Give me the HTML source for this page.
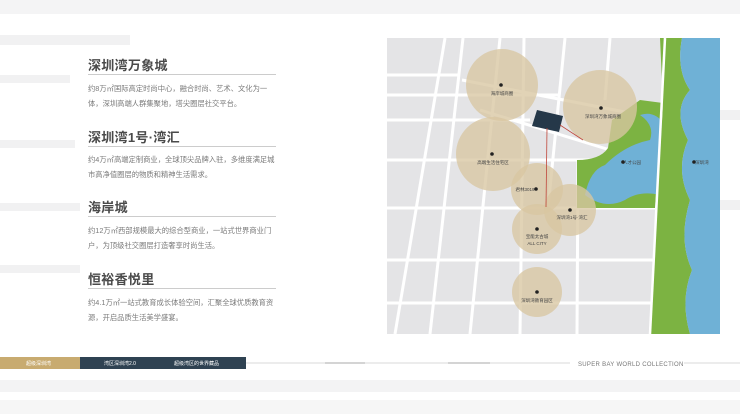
<!DOCTYPE html>
<html><head><meta charset="utf-8"><style>
body{margin:0;width:740px;height:414px;overflow:hidden;background:#fff;font-family:"Liberation Sans","Noto Sans CJK SC",sans-serif;position:relative}
.band{position:absolute;background:#f1f1f2}
h2{position:absolute;left:88px;margin:0;font-size:13px;font-weight:bold;color:#4a4a4a;letter-spacing:0.3px}
.ln{position:absolute;left:88px;width:188px;height:1px;background:#ccc}
p{position:absolute;left:88px;margin:0;font-size:7.3px;line-height:15px;color:#7a7a7a;width:189px}
</style></head><body>
<div class="band" style="left:0;top:0;width:740px;height:14px;background:#f4f4f5"></div>
<div class="band" style="left:0;top:35px;width:130px;height:10px"></div>
<div class="band" style="left:0;top:75px;width:70px;height:8px"></div>
<div class="band" style="left:0;top:140px;width:75px;height:8px"></div>
<div class="band" style="left:0;top:203px;width:80px;height:8px"></div>
<div class="band" style="left:0;top:265px;width:80px;height:8px"></div>
<div class="band" style="left:720px;top:110px;width:20px;height:10px"></div>
<div class="band" style="left:720px;top:200px;width:20px;height:10px"></div>
<div class="band" style="left:0;top:380px;width:740px;height:12px;background:#f3f3f4"></div>
<div class="band" style="left:0;top:400px;width:740px;height:14px;background:#f6f6f6"></div>

<h2 style="top:55px">深圳湾万象城</h2>
<div class="ln" style="top:74px"></div>
<p style="top:81px">约8万㎡国际高定时尚中心，融合时尚、艺术、文化为一体，深圳高端人群集聚地，塔尖圈层社交平台。</p>
<h2 style="top:127px">深圳湾1号·湾汇</h2>
<div class="ln" style="top:146px"></div>
<p style="top:152px">约4万㎡高端定制商业，全球顶尖品牌入驻，多维度满足城市高净值圈层的物质和精神生活需求。</p>
<h2 style="top:197px">海岸城</h2>
<div class="ln" style="top:216px"></div>
<p style="top:223px">约12万㎡西部规模最大的综合型商业，一站式世界商业门户，为顶级社交圈层打造奢享时尚生活。</p>
<h2 style="top:269px">恒裕香悦里</h2>
<div class="ln" style="top:288px"></div>
<p style="top:295px">约4.1万㎡一站式教育成长体验空间，汇聚全球优质教育资源，开启品质生活美学盛宴。</p>

<svg style="position:absolute;left:0;top:0" width="740" height="414">
<rect x="387" y="38" width="333" height="296" fill="#e4e4e6"/>
<g stroke="#fff" stroke-width="3" fill="none">
<line x1="387" y1="95" x2="560" y2="95"/><line x1="387" y1="160" x2="600" y2="160"/>
<line x1="387" y1="208" x2="660" y2="208"/><line x1="387" y1="260" x2="660" y2="260"/>
<line x1="387" y1="303" x2="660" y2="303"/><line x1="387" y1="75" x2="460" y2="75"/>
<line x1="387" y1="120" x2="530" y2="120"/>
<line x1="445" y1="38" x2="395" y2="334"/><line x1="463" y1="38" x2="430" y2="334"/>
<line x1="500" y1="38" x2="470" y2="334"/><line x1="524" y1="38" x2="520" y2="334"/>
<line x1="565" y1="38" x2="548" y2="208"/><line x1="578" y1="160" x2="577" y2="334"/>
<line x1="610" y1="38" x2="605" y2="100"/><line x1="480" y1="110" x2="610" y2="150"/>
<line x1="462" y1="80" x2="640" y2="115"/>
</g>
<path d="M577 208 L577 160 Q600 160 608 148 L612 120 L640 100 L663 103 L655 208 Z" fill="#7cb342"/>
<path d="M585 195 Q590 170 605 165 Q625 145 650 140 Q655 125 640 115 Q655 110 665 125 L660 195 Q640 190 625 200 Q605 210 585 195Z" fill="#6fb1d6"/>
<path d="M660 38 L682 38 Q676 70 690 90 Q672 110 688 140 Q675 170 690 200 Q678 240 692 270 Q680 300 690 334 L650 334 L663 103 Z" fill="#7cb342"/>
<path d="M682 38 L720 38 L720 334 L690 334 Q680 300 692 270 Q678 240 690 200 Q675 170 688 140 Q672 110 690 90 Q676 70 682 38Z" fill="#6fb1d6"/>
<line x1="665" y1="38" x2="650" y2="334" stroke="#fff" stroke-width="2.5"/>
<g fill="#d9c6a2" fill-opacity="0.78">
<circle cx="502" cy="85" r="36"/><circle cx="600" cy="107" r="37"/><circle cx="493" cy="154" r="37"/>
<circle cx="537" cy="189" r="26"/><circle cx="570" cy="210" r="26"/><circle cx="537" cy="229" r="25"/><circle cx="537" cy="292" r="25"/>
</g>
<polygon points="537,110 563,116 559,132 532,126" fill="#253849"/>
<line x1="547" y1="128" x2="546" y2="207" stroke="#c0473c" stroke-width="0.8"/>
<line x1="560" y1="125" x2="583" y2="140" stroke="#c0473c" stroke-width="0.8"/>
<g fill="#222"><circle cx="501" cy="85" r="1.8"/><circle cx="601" cy="108" r="1.8"/><circle cx="492" cy="154" r="1.8"/><circle cx="536" cy="189" r="1.8"/><circle cx="570" cy="210" r="1.8"/><circle cx="537" cy="229" r="1.8"/><circle cx="537" cy="292" r="1.8"/><circle cx="623" cy="162" r="1.8"/><circle cx="694" cy="162" r="1.8"/></g>
<g font-size="4.5" fill="#444" text-anchor="middle" font-family="Liberation Sans,Noto Sans CJK SC,sans-serif">
<text x="502" y="95">海岸城商圈</text><text x="603" y="118">深圳湾万象城商圈</text><text x="493" y="164">高端生活住宅区</text>
<text x="525" y="191">君林3019</text><text x="572" y="219">深圳湾1号·湾汇</text><text x="537" y="238">宝能太古城</text><text x="537" y="245">ALL CITY</text>
<text x="537" y="302">深圳湾教育园区</text><text x="632" y="164">人才公园</text><text x="702" y="164">深圳湾</text></g>
<rect x="0" y="357" width="80" height="12" fill="#c8ab70"/>
<rect x="80" y="357" width="166" height="12" fill="#2f4252"/>
<g font-size="5" fill="#fff" font-family="Liberation Sans,Noto Sans CJK SC,sans-serif"><text x="26" y="365">超级深圳湾</text><text x="104" y="365">湾区深圳湾2.0</text><text x="174" y="365">超级湾区的世界藏品</text></g>
<line x1="246" y1="363" x2="570" y2="363" stroke="#ccc" stroke-width="0.7"/>
<line x1="325" y1="363" x2="365" y2="363" stroke="#999" stroke-width="0.8"/>
<line x1="448" y1="363" x2="490" y2="363" stroke="#999" stroke-width="0.8"/>
<line x1="684" y1="363" x2="740" y2="363" stroke="#ccc" stroke-width="0.7"/>
<text x="578" y="366" font-size="6" fill="#777" letter-spacing="0.3" font-family="Liberation Sans,sans-serif">SUPER BAY WORLD COLLECTION</text>
</svg>
</body></html>
